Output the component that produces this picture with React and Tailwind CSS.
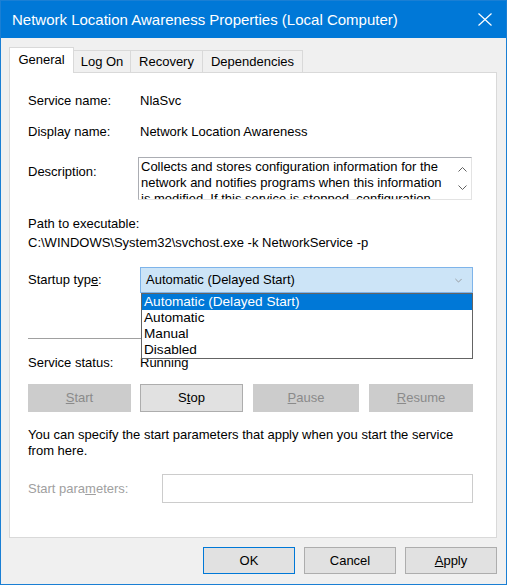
import React from 'react';

const font = { fontFamily: '"Liberation Sans", Arial, sans-serif' };

const tabs = [
  { label: 'General', w: 'w-[65px]', active: true },
  { label: 'Log On', w: 'w-[57px]' },
  { label: 'Recovery', w: 'w-[72px]' },
  { label: 'Dependencies', w: 'w-[100px]' },
];

function Chevron({ up, className }) {
  return (
    <svg width="9" height="5" viewBox="0 0 9 5" className={className}>
      <path d={up ? 'M0.5 4.5 L4.5 0.5 L8.5 4.5' : 'M0.5 0.5 L4.5 4.5 L8.5 0.5'} fill="none" stroke="currentColor" strokeWidth="1" />
    </svg>
  );
}

function ActionButton({ children, disabled, className = '' }) {
  return (
    <div
      className={`${className} h-[28px] flex items-center justify-center border ${
        disabled ? 'bg-[#cccccc] border-[#cccccc] text-[#8a8a8a]' : 'bg-[#e1e1e1] border-[#adadad] text-black'
      }`}
    >
      {children}
    </div>
  );
}

export default function App() {
  return (
    <div className="w-[507px] h-[585px] border border-[#1a7fd4] flex flex-col text-[13px] leading-[16px] text-black" style={font}>
      {/* Title bar */}
      <div className="h-[37px] bg-[#0078d7] flex items-center justify-between pl-[11px] pr-[14px] text-white text-[15px]">
        <span>Network Location Awareness Properties (Local Computer)</span>
        <svg width="14" height="13" viewBox="0 0 14 13">
          <path d="M0.5 0.5 L13.5 12.5 M13.5 0.5 L0.5 12.5" stroke="white" strokeWidth="1.2" fill="none" />
        </svg>
      </div>

      {/* Body */}
      <div className="flex-1 bg-[#f0f0f0] pt-[10px] pl-[8px] pr-[9px] flex flex-col">
        {/* Tabs */}
        <div className="h-[24px] flex items-end">
          {tabs.map((t) =>
            t.active ? (
              <div
                key={t.label}
                className={`${t.w} h-[26px] -mb-px relative z-10 bg-white border border-b-0 border-[#d9d9d9] flex items-center justify-center pb-[1px]`}
              >
                {t.label}
              </div>
            ) : (
              <div
                key={t.label}
                className={`${t.w} h-[22px] bg-[#f0f0f0] border border-l-0 border-b-0 border-[#d9d9d9] flex items-center justify-center`}
              >
                {t.label}
              </div>
            )
          )}
        </div>

        {/* Panel */}
        <div className="h-[466px] bg-white border border-[#d9d9d9] pl-[18px] pr-[23px] pt-[20px]">
          <div className="flex">
            <div className="w-[112px]">Service name:</div>
            <div>NlaSvc</div>
          </div>
          <div className="flex mt-[15px]">
            <div className="w-[112px]">Display name:</div>
            <div>Network Location Awareness</div>
          </div>
          <div className="flex mt-[17px] items-start">
            <div className="w-[110px] mt-[7px]">Description:</div>
            <div className="w-[334px] h-[43px] border border-[#abadb3] border-b-[#e3e3e3] border-r-[#e3e3e3] flex overflow-hidden">
              <div className="flex-1 pl-[2px] pt-[1px] overflow-hidden">
                Collects and stores configuration information for the network and notifies programs when this information is modified. If this service is stopped, configuration information might be unavailable.
              </div>
              <div className="w-[17px] flex flex-col items-center justify-between py-[9px] text-[#606060]">
                <Chevron up />
                <Chevron />
              </div>
            </div>
          </div>

          <div className="mt-[16px]">Path to executable:</div>
          <div className="mt-[3px]">C:\WINDOWS\System32\svchost.exe -k NetworkService -p</div>

          <div className="flex items-center mt-[16px]">
            <div className="w-[112px]">
              Startup typ<span className="underline">e</span>:
            </div>
            <div className="relative flex-1">
              <div className="h-[26px] bg-[#cce4f7] border border-[#7eb4ea] flex items-center justify-between pl-[5px] pr-[10px]">
                <span>Automatic (Delayed Start)</span>
                <Chevron className="text-[#8a8a8a] w-[7px]" />
              </div>
              <div className="absolute left-px right-0 top-full z-20 bg-white border border-[#646464] flex flex-col text-[13.6px]">
                <div className="h-[16px] bg-[#0078d7] text-white pl-[2px]">Automatic (Delayed Start)</div>
                <div className="h-[16px] pl-[2px]">Automatic</div>
                <div className="h-[16px] pl-[2px]">Manual</div>
                <div className="h-[16px] pl-[2px]">Disabled</div>
              </div>
            </div>
          </div>

          <div className="mt-[45px] h-px bg-[#a0a0a0]" />

          <div className="flex mt-[16px]">
            <div className="w-[112px]">Service status:</div>
            <div>Running</div>
          </div>

          <div className="flex mt-[13px]">
            <ActionButton disabled className="w-[103px]">
              <span className="underline">S</span>tart
            </ActionButton>
            <ActionButton className="w-[103px] ml-[9px]">
              S<span className="underline">t</span>op
            </ActionButton>
            <ActionButton disabled className="w-[106px] ml-[10px]">
              <span className="underline">P</span>ause
            </ActionButton>
            <ActionButton disabled className="w-[104px] ml-[10px]">
              <span className="underline">R</span>esume
            </ActionButton>
          </div>

          <p className="mt-[15px]">
            You can specify the start parameters that apply when you start the service from here.
          </p>

          <div className="flex items-center mt-[15px]">
            <div className="w-[134px] text-[#a0a0a0]">
              Start para<span className="underline">m</span>eters:
            </div>
            <div className="flex-1 h-[29px] border border-[#cccccc] bg-white" />
          </div>
        </div>

        {/* Dialog buttons */}
        <div className="flex justify-end gap-[9px] mt-[9px]">
          <div className="w-[92px] h-[27px] bg-[#e1e1e1] border border-[#0078d7] flex items-center justify-center">OK</div>
          <div className="w-[92px] h-[27px] bg-[#e1e1e1] border border-[#adadad] flex items-center justify-center">Cancel</div>
          <div className="w-[92px] h-[27px] bg-[#e1e1e1] border border-[#adadad] flex items-center justify-center">
            <span className="underline">A</span>pply
          </div>
        </div>
      </div>
    </div>
  );
}
